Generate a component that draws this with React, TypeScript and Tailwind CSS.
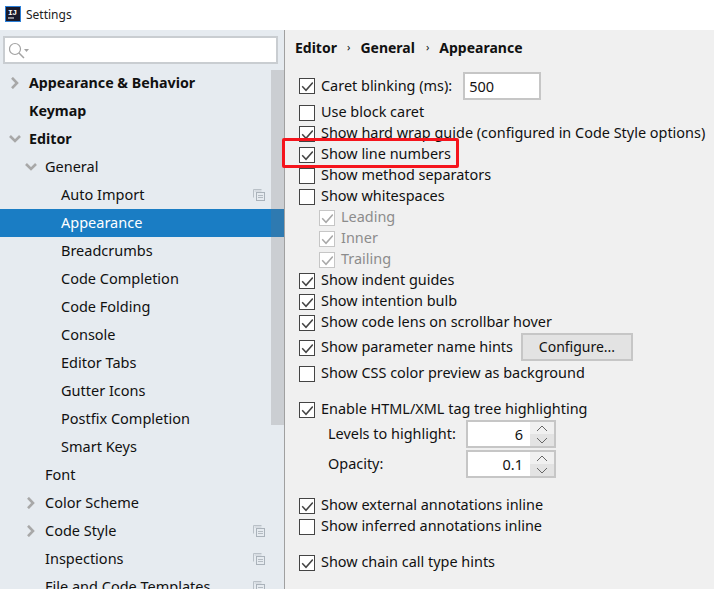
import React from "react";

function Chevron({ dir }: { dir: "right" | "down" }) {
  return (
    <svg width="12" height="12" viewBox="0 0 12 12" className="shrink-0">
      {dir === "right" ? (
        <path d="M3 0.8 L8 6 L3 11.2" fill="none" stroke="#a8a8a8" strokeWidth="2.6" />
      ) : (
        <path d="M1 3 L6 8 L11 3" fill="none" stroke="#a8a8a8" strokeWidth="2.6" />
      )}
    </svg>
  );
}

function CopyIcon() {
  return (
    <svg width="12" height="12" viewBox="0 0 12 12" className="shrink-0">
      <path d="M0.5 8.5 V0.5 H8.5" fill="none" stroke="#b9c0c7" strokeWidth="1" />
      <rect x="1.5" y="1.5" width="7" height="1" fill="#c8ced4" />
      <rect x="3.5" y="3.5" width="8" height="8" fill="none" stroke="#aab2ba" strokeWidth="1" />
      <path d="M5 6.5 H10 M5 8.5 H10" stroke="#b4bbc2" strokeWidth="1" />
    </svg>
  );
}

type TreeItem = {
  label: string;
  indent: string;
  chevron?: "right" | "down";
  bold?: boolean;
  selected?: boolean;
  copy?: boolean;
};

const tree: TreeItem[] = [
  { label: "Appearance & Behavior", indent: "pl-[9px]", chevron: "right", bold: true },
  { label: "Keymap", indent: "pl-[29px]", bold: true },
  { label: "Editor", indent: "pl-[9px]", chevron: "down", bold: true },
  { label: "General", indent: "pl-[25px]", chevron: "down" },
  { label: "Auto Import", indent: "pl-[61px]", copy: true },
  { label: "Appearance", indent: "pl-[61px]", selected: true },
  { label: "Breadcrumbs", indent: "pl-[61px]" },
  { label: "Code Completion", indent: "pl-[61px]" },
  { label: "Code Folding", indent: "pl-[61px]" },
  { label: "Console", indent: "pl-[61px]" },
  { label: "Editor Tabs", indent: "pl-[61px]" },
  { label: "Gutter Icons", indent: "pl-[61px]" },
  { label: "Postfix Completion", indent: "pl-[61px]" },
  { label: "Smart Keys", indent: "pl-[61px]" },
  { label: "Font", indent: "pl-[45px]" },
  { label: "Color Scheme", indent: "pl-[25px]", chevron: "right" },
  { label: "Code Style", indent: "pl-[25px]", chevron: "right", copy: true },
  { label: "Inspections", indent: "pl-[45px]", copy: true },
  { label: "File and Code Templates", indent: "pl-[45px]", copy: true },
];

function TreeRow({ item }: { item: TreeItem }) {
  return (
    <div
      className={`h-7 shrink-0 flex items-center ${item.indent} ${item.selected ? "bg-[#1a7dc4] text-white" : "text-[#111]"}`}
    >
      {item.chevron && (
        <span className="w-5 flex shrink-0">
          <Chevron dir={item.chevron} />
        </span>
      )}
      <span className={`leading-7 whitespace-nowrap ${item.bold ? "font-bold text-[14.25px]" : "-mt-[2px] text-[14.5px]"}`}>{item.label}</span>
      {item.copy && (
        <span className="ml-auto mr-[19px]">
          <CopyIcon />
        </span>
      )}
    </div>
  );
}

function Check({ on, dim }: { on?: boolean; dim?: boolean }) {
  return (
    <span
      className={`w-4 h-4 shrink-0 flex items-center justify-center bg-white border ${dim ? "border-[#c6c6c6]" : "border-[#444]"}`}
    >
      {on && (
        <svg width="12" height="12" viewBox="0 0 12 12">
          <path d="M1.2 6.3 L5 10.3 L11.8 2.5" fill="none" stroke={dim ? "#a8a8a8" : "#444"} strokeWidth="1.5" />
        </svg>
      )}
    </span>
  );
}

function Row({
  label,
  on,
  dim,
  h,
  children,
  indent,
}: {
  label: string;
  on?: boolean;
  dim?: boolean;
  h: string;
  children?: React.ReactNode;
  indent?: boolean;
}) {
  return (
    <div className={`flex items-center shrink-0 ${h} ${indent ? "pl-[34px]" : "pl-[14px]"}`}>
      <Check on={on} dim={dim} />
      <span className={`ml-[6px] -mt-[1px] text-[14.45px] whitespace-nowrap ${dim ? "text-[#8c8c8c]" : "text-[#111]"}`}>{label}</span>
      {children}
    </div>
  );
}

function Spinner({ label, value, mt }: { label: string; value: string; mt: string }) {
  return (
    <div className={`flex items-center h-7 shrink-0 pl-[43px] ${mt}`}>
      <span className="w-[138px] -mt-[1px] text-[14.45px] text-[#111] whitespace-nowrap">{label}</span>
      <div className="w-[90px] h-7 flex border-2 border-[#c6c6c6] bg-white">
        <span className="flex-1 text-right pr-[7px] text-[14.5px] leading-6 text-[#111]">{value}</span>
        <div className="w-6 flex flex-col bg-[#e3e3e3]">
          <span className="flex-1 flex items-center justify-center bg-[#f0f0f0]">
            <svg width="12" height="7" viewBox="0 0 12 7"><path d="M1 6 L6 1 L11 6" fill="none" stroke="#666" strokeWidth="1" /></svg>
          </span>
          <span className="flex-1 flex items-center justify-center">
            <svg width="12" height="7" viewBox="0 0 12 7"><path d="M1 1 L6 6 L11 1" fill="none" stroke="#666" strokeWidth="1" /></svg>
          </span>
        </div>
      </div>
    </div>
  );
}

export default function App() {
  return (
    <div
      className="relative w-[714px] h-[589px] overflow-hidden flex flex-col bg-white"
      style={{ fontFamily: '"Noto Sans", "Open Sans", sans-serif' }}
    >
      <div className="h-[30px] shrink-0 flex items-center pl-[5px] bg-white">
        <svg width="16" height="16" viewBox="0 0 16 16" className="shrink-0 -mt-[2px]">
          <rect x="0.5" y="0.5" width="15" height="15" fill="#1a1a2a" stroke="#2b7fd8" />
          <rect x="3" y="11.5" width="6" height="1" fill="#fff" />
          <text x="3" y="9" fontSize="8" fontWeight="700" fill="#fff" fontFamily="Liberation Mono" textLength="9">IJ</text>
        </svg>
        <span className="ml-[5px] text-[12px] text-[#222]">Settings</span>
      </div>
      <div className="flex-1 flex min-h-0">
        <div className="relative w-[285px] shrink-0 bg-[#e6ebf0] border-r border-[#a0a0a0] flex flex-col overflow-hidden">
          <div className="mt-[6px] ml-[3px] w-[275px] h-[28px] shrink-0 bg-white border-2 border-[#c9cdd1] flex items-center pl-[4px]">
            <svg width="20" height="18" viewBox="0 0 20 18">
              <circle cx="6" cy="8" r="5.5" fill="none" stroke="#a3a3a3" strokeWidth="1.2" />
              <path d="M10 12 L15 17" stroke="#a3a3a3" strokeWidth="1.5" />
              <path d="M15 8 H20 L17.5 11 Z" fill="#a3a3a3" />
            </svg>
          </div>
          <div className="mt-[5px] flex flex-col">
            {tree.map((t) => (
              <TreeRow key={t.label} item={t} />
            ))}
          </div>
          <div className="absolute right-0 top-[40px] w-[13px] h-[355px] bg-[#737373]/[0.235]" />
        </div>
        <div className="flex-1 bg-[#f0f0f0] flex flex-col min-w-0">
          <div className="h-[36px] shrink-0 flex items-center pl-[10px] pb-[2px] text-[14px] font-bold text-[#111]">
            <span>Editor</span>
            <span className="ml-[10px] mr-[10px] text-[11px] font-normal">›</span>
            <span>General</span>
            <span className="ml-[11px] mr-[10px] text-[11px] font-normal">›</span>
            <span>Appearance</span>
          </div>
          <Row label="Caret blinking (ms):" on h="h-[28px] mt-[6px]">
            <div className="ml-[11px] w-[78px] h-[28px] bg-white border-2 border-[#c6c6c6] pl-[4px] text-[14.5px] leading-6 text-[#111]">500</div>
          </Row>
          <Row label="Use block caret" h="h-[21px] mt-[2px]" />
          <Row label="Show hard wrap guide (configured in Code Style options)" on h="h-[21px]" />
          <Row label="Show line numbers" on h="h-[21px]" />
          <Row label="Show method separators" h="h-[21px]" />
          <Row label="Show whitespaces" h="h-[21px]" />
          <Row label="Leading" on dim indent h="h-[21px]" />
          <Row label="Inner" on dim indent h="h-[21px]" />
          <Row label="Trailing" on dim indent h="h-[21px]" />
          <Row label="Show indent guides" on h="h-[21px]" />
          <Row label="Show intention bulb" on h="h-[21px]" />
          <Row label="Show code lens on scrollbar hover" on h="h-[21px]" />
          <Row label="Show parameter name hints" on h="h-[29px]">
            <button className="ml-[8px] self-start w-[112px] h-[28px] bg-[#e3e3e3] border-2 border-[#c6c6c6] text-[14px] leading-5 text-[#111]">Configure...</button>
          </Row>
          <Row label="Show CSS color preview as background" h="h-[23px]" />
          <Row label="Enable HTML/XML tag tree highlighting" on h="h-[21px] mt-[14px]" />
          <Spinner label="Levels to highlight:" value="6" mt="mt-0" />
          <Spinner label="Opacity:" value="0.1" mt="mt-[2px]" />
          <Row label="Show external annotations inline" on h="h-[21px] mt-[17px]" />
          <Row label="Show inferred annotations inline" h="h-[21px]" />
          <Row label="Show chain call type hints" on h="h-[21px] mt-[15px]" />
        </div>
      </div>
      <div className="absolute left-[282px] top-[138px] w-[177px] h-[30px] border-[3px] border-[#f5141c] rounded-[2px]" />
    </div>
  );
}
